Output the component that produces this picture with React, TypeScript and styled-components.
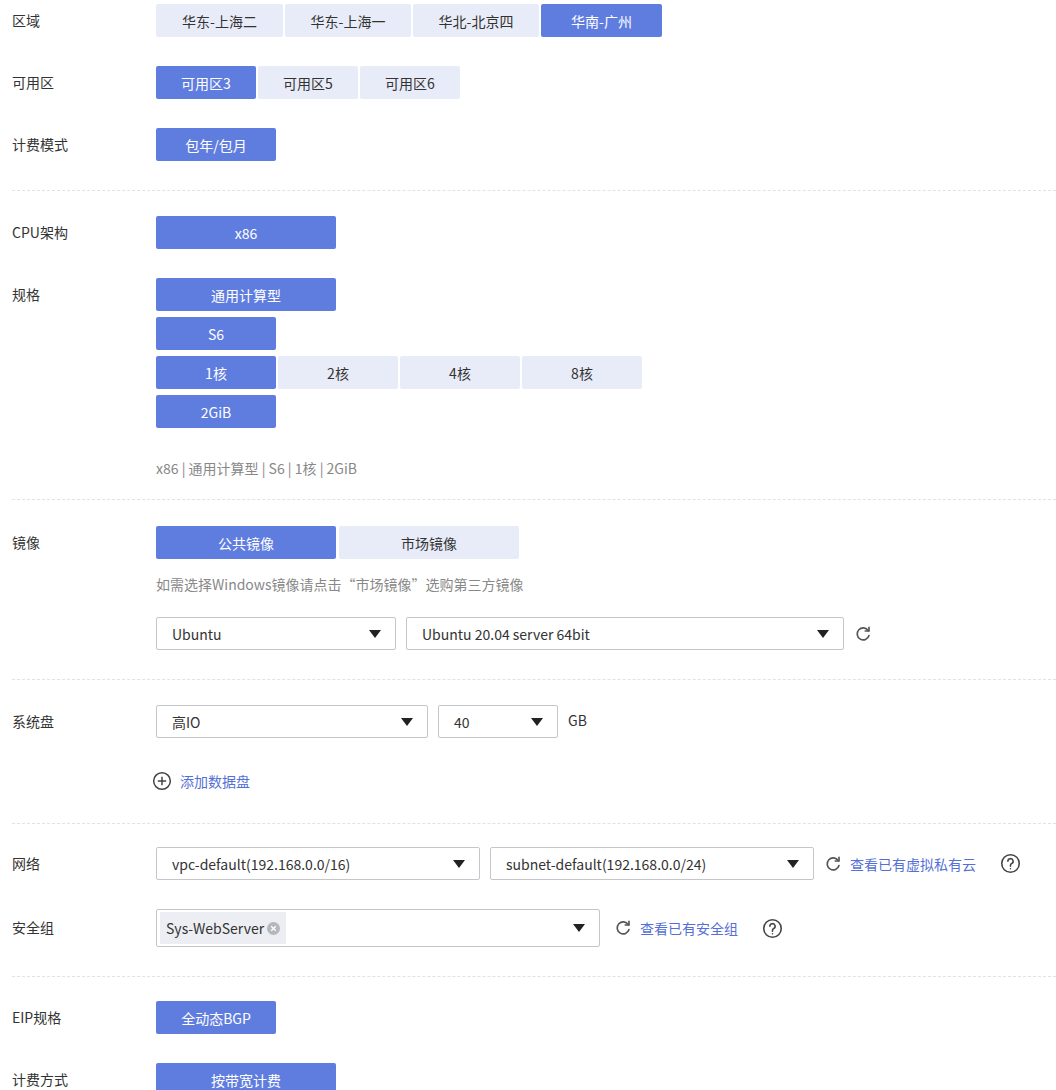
import React from "react";
import styled, { createGlobalStyle } from "styled-components";

const Global = createGlobalStyle`
  body { margin: 0; background: #fff; font-family: "Noto Sans CJK SC", "Open Sans", sans-serif; font-size: 14px; color: #333; }
`;

const P = "#5f7ddf";
const L = "#e8ecf8";

const Page = styled.div`
  width: 1056px;
  height: 1090px;
  overflow: hidden;
  padding: 4px 0 0 12px;
  box-sizing: border-box;
  display: flex;
  flex-direction: column;
`;
const Row = styled.div<{ $mt?: number }>`
  display: flex;
  margin-top: ${(p) => p.$mt ?? 0}px;
`;
const Label = styled.div`
  width: 144px;
  flex: none;
  line-height: 33px;
  font-size: 14px;
`;
const Content = styled.div<{ $gap?: number }>`
  display: flex;
  flex-direction: column;
  gap: ${(p) => p.$gap ?? 6}px;
`;
const Group = styled.div`
  display: flex;
  gap: 2px;
  align-items: center;
`;
const Btn = styled.div<{ $w: number; $on?: boolean }>`
  width: ${(p) => p.$w}px;
  height: 33px;
  box-sizing: border-box;
  display: flex;
  align-items: center;
  justify-content: center;
  border-radius: 2px;
  background: ${(p) => (p.$on ? P : L)};
  color: ${(p) => (p.$on ? "#fff" : "#333")};
  font-size: 14px;
`;
const Divider = styled.div<{ $mt: number }>`
  margin-top: ${(p) => p.$mt}px;
  border-top: 1px dashed #e2e2e2;
  width: 1044px;
`;
const Muted = styled.div`
  color: #888;
  font-size: 14px;
  line-height: 20px;
`;
const Select = styled.div<{ $w: number; $h?: number }>`
  width: ${(p) => p.$w}px;
  height: ${(p) => p.$h ?? 33}px;
  box-sizing: border-box;
  border: 1px solid #c4c6cc;
  border-radius: 2px;
  display: flex;
  align-items: center;
  padding: 0 14px 0 15px;
  font-size: 14px;
  color: #333;
  & > span.v { flex: 1; white-space: nowrap; }
`;
const Tri = styled.span`
  width: 0;
  height: 0;
  border-left: 6px solid transparent;
  border-right: 6px solid transparent;
  border-top: 8px solid #222;
`;
const Link = styled.span`
  color: #5470d6;
  font-size: 14px;
`;
const Tag = styled.span`
  display: flex;
  align-items: center;
  gap: 3px;
  background: #eceef3;
  height: 32px;
  padding: 0 6px 0 6px;
  margin-left: -12px;
  flex: none;
`;
const Unit = styled.span`
  align-self: flex-start;
  line-height: 30px;
  margin-left: 10px;
`;
const Add = styled.div`
  display: flex;
  align-items: center;
  gap: 8px;
  margin-left: -4px;
`;

const Refresh = () => (
  <svg width="18" height="18" viewBox="0 0 24 24" fill="none" stroke="#555" strokeWidth="2.2" strokeLinecap="round">
    <path d="M19 7.5A8 8 0 1 0 20 14" />
    <path d="M20 3v5h-5" />
  </svg>
);
const Help = () => (
  <svg width="21" height="21" viewBox="0 0 24 24" fill="none" stroke="#444" strokeWidth="1.8">
    <circle cx="12" cy="12" r="10" />
    <path d="M9 9.5a3 3 0 1 1 4 2.8c-.8.4-1 .9-1 1.7v1" strokeLinecap="round" />
    <circle cx="12" cy="18" r="0.9" fill="#444" stroke="none" />
  </svg>
);
const Plus = () => (
  <svg width="20" height="20" viewBox="0 0 24 24" fill="none" stroke="#444" strokeWidth="1.8">
    <circle cx="12" cy="12" r="10" />
    <path d="M12 7v10M7 12h10" />
  </svg>
);
const X = () => (
  <svg width="13" height="13" viewBox="0 0 14 14">
    <circle cx="7" cy="7" r="7" fill="#b5b7bd" />
    <path d="M4.5 4.5l5 5M9.5 4.5l-5 5" stroke="#fff" strokeWidth="1.4" />
  </svg>
);

const Inline = styled.div<{ $gap?: number }>`
  display: flex;
  align-items: center;
  gap: ${(p) => p.$gap ?? 10}px;
`;

export default function App() {
  return (
    <Page>
      <Global />
      <Row>
        <Label>区域</Label>
        <Group>
          <Btn $w={127}>华东-上海二</Btn>
          <Btn $w={126}>华东-上海一</Btn>
          <Btn $w={126}>华北-北京四</Btn>
          <Btn $w={121} $on>华南-广州</Btn>
        </Group>
      </Row>
      <Row $mt={29}>
        <Label>可用区</Label>
        <Group>
          <Btn $w={100} $on>可用区3</Btn>
          <Btn $w={100}>可用区5</Btn>
          <Btn $w={100}>可用区6</Btn>
        </Group>
      </Row>
      <Row $mt={29}>
        <Label>计费模式</Label>
        <Btn $w={120} $on>包年/包月</Btn>
      </Row>
      <Divider $mt={29} />
      <Row $mt={25}>
        <Label>CPU架构</Label>
        <Btn $w={180} $on>x86</Btn>
      </Row>
      <Row $mt={29}>
        <Label>规格</Label>
        <Content>
          <Btn $w={180} $on>通用计算型</Btn>
          <Btn $w={120} $on>S6</Btn>
          <Group>
            <Btn $w={120} $on>1核</Btn>
            <Btn $w={120}>2核</Btn>
            <Btn $w={120}>4核</Btn>
            <Btn $w={120}>8核</Btn>
          </Group>
          <Btn $w={120} $on>2GiB</Btn>
          <Muted style={{ marginTop: 24 }}>x86 | 通用计算型 | S6 | 1核 | 2GiB</Muted>
        </Content>
      </Row>
      <Divider $mt={21} />
      <Row $mt={26}>
        <Label>镜像</Label>
        <Content $gap={0}>
          <Group style={{ gap: 3 }}>
            <Btn $w={180} $on>公共镜像</Btn>
            <Btn $w={180}>市场镜像</Btn>
          </Group>
          <Muted style={{ marginTop: 15 }}>如需选择Windows镜像请点击“市场镜像”选购第三方镜像</Muted>
          <Inline style={{ marginTop: 23 }}>
            <Select $w={240}><span className="v">Ubuntu</span><Tri /></Select>
            <Select $w={438}><span className="v">Ubuntu 20.04 server 64bit</span><Tri /></Select>
            <Refresh />
          </Inline>
        </Content>
      </Row>
      <Divider $mt={29} />
      <Row $mt={25}>
        <Label>系统盘</Label>
        <Content $gap={0}>
          <Inline>
            <Select $w={272}><span className="v">高IO</span><Tri /></Select>
            <Select $w={120}><span className="v">40</span><Tri /></Select>
            <Unit style={{ marginLeft: 0 }}>GB</Unit>
          </Inline>
          <Add style={{ marginTop: 33 }}>
            <Plus />
            <Link>添加数据盘</Link>
          </Add>
        </Content>
      </Row>
      <Divider $mt={32} />
      <Row $mt={23}>
        <Label>网络</Label>
        <Inline>
          <Select $w={324}><span className="v">vpc-default(192.168.0.0/16)</span><Tri /></Select>
          <Select $w={324}><span className="v">subnet-default(192.168.0.0/24)</span><Tri /></Select>
          <Inline $gap={8}>
            <Refresh />
            <Link>查看已有虚拟私有云</Link>
          </Inline>
          <span style={{ marginLeft: 14, display: "flex" }}><Help /></span>
        </Inline>
      </Row>
      <Row $mt={29}>
        <Label style={{ lineHeight: "36px" }}>安全组</Label>
        <Inline>
          <Select $w={444} $h={38}>
            <span className="v" style={{ display: "flex" }}>
              <Tag>Sys-WebServer<X /></Tag>
            </span>
            <Tri />
          </Select>
          <Inline $gap={8}>
            <span style={{ marginLeft: 4, display: "flex" }}><Refresh /></span>
            <Link>查看已有安全组</Link>
          </Inline>
          <span style={{ marginLeft: 14, display: "flex" }}><Help /></span>
        </Inline>
      </Row>
      <Divider $mt={29} />
      <Row $mt={24}>
        <Label>EIP规格</Label>
        <Btn $w={120} $on>全动态BGP</Btn>
      </Row>
      <Row $mt={29}>
        <Label>计费方式</Label>
        <Btn $w={180} $on>按带宽计费</Btn>
      </Row>
    </Page>
  );
}
